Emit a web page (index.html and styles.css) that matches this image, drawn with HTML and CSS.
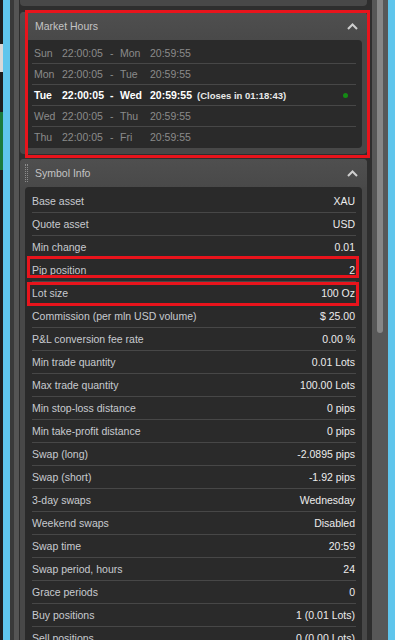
FILE: index.html
```html
<!DOCTYPE html>
<html>
<head>
<meta charset="utf-8">
<link rel="stylesheet" href="styles.css">
</head>
<body>
<div class="app">
  <div class="edge"><span class="edge-white"></span><span class="edge-green"></span></div>
  <div class="blue"></div>
  <div class="g1"></div>
  <div class="g2"></div>
  <div class="panel">
    <div class="prev-card"></div>

    <section class="card market">
      <header class="card-head">
        <span class="grip"></span>
        <span class="card-title">Market Hours</span>
        <svg class="chev" width="11" height="7" viewBox="0 0 11 7"><polyline points="1,6 5.5,1.5 10,6" fill="none" stroke="#cfcfcf" stroke-width="2"/></svg>
      </header>
      <div class="card-body">
        <div class="mh-row"><span>Sun</span><span>22:00:05</span><span>-</span><span>Mon</span><span>20:59:55</span><span></span><span></span></div>
        <div class="mh-row"><span>Mon</span><span>22:00:05</span><span>-</span><span>Tue</span><span>20:59:55</span><span></span><span></span></div>
        <div class="mh-row active"><span>Tue</span><span>22:00:05</span><span>-</span><span>Wed</span><span>20:59:55</span><span class="note">(Closes in 01:18:43)</span><span class="dot"></span></div>
        <div class="mh-row"><span>Wed</span><span>22:00:05</span><span>-</span><span>Thu</span><span>20:59:55</span><span></span><span></span></div>
        <div class="mh-row last"><span>Thu</span><span>22:00:05</span><span>-</span><span>Fri</span><span>20:59:55</span><span></span><span></span></div>
      </div>
    </section>

    <section class="card symbol">
      <header class="card-head">
        <span class="grip"></span>
        <span class="card-title">Symbol Info</span>
        <svg class="chev" width="11" height="7" viewBox="0 0 11 7"><polyline points="1,6 5.5,1.5 10,6" fill="none" stroke="#cfcfcf" stroke-width="2"/></svg>
      </header>
      <div class="card-body">
        <div class="si-row"><span class="lbl">Base asset</span><span class="val">XAU</span></div>
        <div class="si-row"><span class="lbl">Quote asset</span><span class="val">USD</span></div>
        <div class="si-row"><span class="lbl">Min change</span><span class="val">0.01</span></div>
        <div class="si-row"><span class="lbl">Pip position</span><span class="val">2</span></div>
        <div class="si-row"><span class="lbl">Lot size</span><span class="val">100 Oz</span></div>
        <div class="si-row"><span class="lbl">Commission (per mln USD volume)</span><span class="val">$ 25.00</span></div>
        <div class="si-row"><span class="lbl">P&amp;L conversion fee rate</span><span class="val">0.00 %</span></div>
        <div class="si-row"><span class="lbl">Min trade quantity</span><span class="val">0.01 Lots</span></div>
        <div class="si-row"><span class="lbl">Max trade quantity</span><span class="val">100.00 Lots</span></div>
        <div class="si-row"><span class="lbl">Min stop-loss distance</span><span class="val">0 pips</span></div>
        <div class="si-row"><span class="lbl">Min take-profit distance</span><span class="val">0 pips</span></div>
        <div class="si-row"><span class="lbl">Swap (long)</span><span class="val">-2.0895 pips</span></div>
        <div class="si-row"><span class="lbl">Swap (short)</span><span class="val">-1.92 pips</span></div>
        <div class="si-row"><span class="lbl">3-day swaps</span><span class="val">Wednesday</span></div>
        <div class="si-row"><span class="lbl">Weekend swaps</span><span class="val">Disabled</span></div>
        <div class="si-row"><span class="lbl">Swap time</span><span class="val">20:59</span></div>
        <div class="si-row"><span class="lbl">Swap period, hours</span><span class="val">24</span></div>
        <div class="si-row"><span class="lbl">Grace periods</span><span class="val">0</span></div>
        <div class="si-row"><span class="lbl">Buy positions</span><span class="val">1 (0.01 Lots)</span></div>
        <div class="si-row"><span class="lbl">Sell positions</span><span class="val">0 (0.00 Lots)</span></div>
      </div>
    </section>
  </div>
  <div class="scroll"><div class="thumb"></div></div>
  <div class="blue"></div>

  <div class="mark mark-market"></div>
  <div class="mark mark-pip"></div>
  <div class="mark mark-lot"></div>
</div>
</body>
</html>
```

FILE: styles.css
```css
html, body {
  margin: 0;
  padding: 0;
  background: #2d2d2d;
}
.app {
  position: relative;
  display: flex;
  width: 395px;
  height: 640px;
  overflow: hidden;
  font-family: "Liberation Sans", Arial, sans-serif;
  font-size: 10.5px;
}
.edge {
  width: 3px;
  background: #1e1e1e;
  display: flex;
  flex-direction: column;
  flex-shrink: 0;
}
.edge-white {
  margin-top: 44px;
  height: 28px;
  background: #d8d8d8;
}
.edge-green {
  margin-top: 40px;
  height: 58px;
  background: #1b7a3c;
}
.blue {
  width: 7px;
  background: #5fc5ec;
  flex-shrink: 0;
}
.g1 {
  width: 4px;
  background: #3a3a3a;
  flex-shrink: 0;
}
.g2 {
  width: 5px;
  background: #555555;
  flex-shrink: 0;
}
.panel {
  width: 353px;
  flex-shrink: 0;
  background: #2e2e2e;
  padding: 0 5px 0 1px;
  box-sizing: border-box;
  display: flex;
  flex-direction: column;
}
.prev-card {
  height: 6px;
  flex-shrink: 0;
  background: #484848;
  border-radius: 0 0 4px 4px;
}
.card {
  flex-shrink: 0;
  background: #484848;
  border-radius: 4px;
  padding: 0 5px 6px;
}
.market {
  margin-top: 6px;
}
.symbol {
  margin-top: 5px;
}
.card-head {
  height: 28px;
  display: flex;
  align-items: center;
  background: linear-gradient(#4f4f4f, #494949);
  margin: 0 -5px;
  padding-left: 5px;
  padding-right: 9px;
  border-radius: 4px 4px 0 0;
}
.grip {
  width: 1px;
  height: 18px;
  border-left: 1px dotted #8c8c8c;
  border-right: 1px dotted #8c8c8c;
}
.card-title {
  margin-left: 7px;
  color: #c4c4c4;
  flex: 1;
}
.chev {
  display: block;
}
.card-body {
  background: #2a2a2a;
  border-radius: 4px;
  padding: 3px 6px 1px 7px;
}
.mh-row {
  height: 20px;
  border-bottom: 1px solid #474747;
  display: grid;
  grid-template-columns: 28px 48px 10px 30px 47px 1fr 13px;
  align-items: center;
  padding-left: 2px;
  color: #8a8a8a;
}
.mh-row.last {
  border-bottom: none;
}
.mh-row.active {
  color: #ffffff;
  font-weight: bold;
}
.note {
  font-size: 9.5px;
  color: #e8e8e8;
}
.dot {
  width: 5px;
  height: 5px;
  border-radius: 50%;
  background: #148a14;
}
.si-row {
  height: 22px;
  border-bottom: 1px solid #474747;
  display: flex;
  align-items: center;
  justify-content: space-between;
  padding-right: 1px;
}
.lbl {
  color: #c8cad0;
}
.val {
  color: #ececec;
}
.scroll {
  width: 16px;
  flex-shrink: 0;
  background: #575757;
  display: flex;
  justify-content: center;
}
.thumb {
  width: 6px;
  height: 333px;
  background: #868686;
  border-radius: 0 0 3px 3px;
}
.mark {
  position: absolute;
  border: 3px solid #e8141c;
  box-sizing: border-box;
}
.mark-market {
  left: 25px;
  top: 10px;
  width: 345px;
  height: 148px;
}
.mark-pip {
  left: 27px;
  top: 256px;
  width: 332px;
  height: 22px;
}
.mark-lot {
  left: 27px;
  top: 282px;
  width: 332px;
  height: 24px;
}
```
